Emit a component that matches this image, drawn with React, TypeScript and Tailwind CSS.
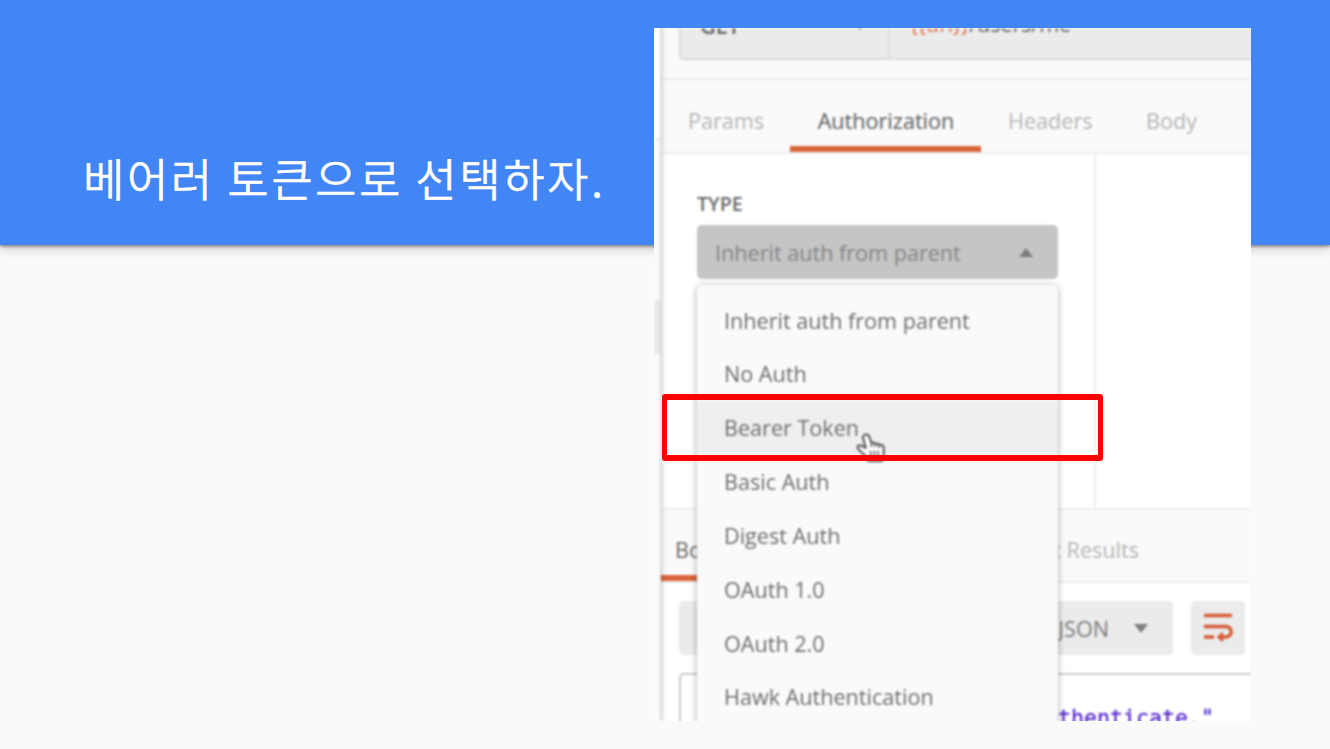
import type { ReactNode } from "react";

const authTypes = [
  "Inherit auth from parent",
  "No Auth",
  "Bearer Token",
  "Basic Auth",
  "Digest Auth",
  "OAuth 1.0",
  "OAuth 2.0",
  "Hawk Authentication",
];

function Triangle({ up = false }: { up?: boolean }) {
  return (
    <svg width="14" height="9" viewBox="0 0 14 9" className="shrink-0 fill-[#7c7c7c]">
      {up ? <path d="M7 0 14 9H0z" /> : <path d="M0 0h14L7 9z" />}
    </svg>
  );
}

function Tab({ children, active = false, className }: { children: ReactNode; active?: boolean; className: string }) {
  return (
    <div
      className={`flex h-full shrink-0 items-center whitespace-nowrap border-b-[6px] ${
        active ? "border-[#d9633a] text-[#6a6a6a]" : "border-transparent text-[#b5b5b5]"
      } ${className}`}
    >
      {children}
    </div>
  );
}

function RequestBar() {
  return (
    <div className="h-[52px] border-b-2 border-[#efefef] pl-[18px]">
      <div className="flex h-8 w-[600px] overflow-hidden rounded-bl-[5px] border-b-2 border-l-2 border-[#dadada] bg-[#ebebeb]">
        <div className="-mt-[19px] flex h-[33px] w-[207px] shrink-0 items-center pl-[19px] font-semibold text-[#666]">
          <span className="w-[153px]">GET</span>
          <Triangle />
        </div>
        <div className="h-8 w-px bg-[#d0d0d0]" />
        <div className="-mt-[21px] flex h-[33px] items-center pl-[21px] tracking-[-0.1px] text-[#666]">
          <span className="text-[#dd7755]">{"{{url}}"}</span>/users/me
        </div>
      </div>
    </div>
  );
}

function AuthMenu() {
  return (
    <ul className="absolute left-[43px] top-[257px] h-[460px] w-[361px] rounded-t-[5px] bg-[#fafafa] pt-[8.6px] shadow-[0_1px_6px_rgba(0,0,0,0.36)]">
      {authTypes.map((name) => (
        <li
          key={name}
          className={`flex h-[53.85px] items-center pl-[27px] text-[#6c6c6c] ${name === "Bearer Token" ? "bg-[#efefef]" : ""}`}
        >
          {name}
        </li>
      ))}
    </ul>
  );
}

function HandCursor() {
  return (
    <svg className="absolute left-[202px] top-[403px]" width="30" height="34" viewBox="0 0 31 36" fill="none">
      <path
        d="M9 4c2-1 4 0 5 3l2 6c1-1 3-1 4 1 1-1 4-1 4 1 2-1 5 0 5 3v6c0 3-2 5-2 8H13c-1-4-4-6-7-9l-4-4c-2-3 1-5 4-3l4 2-3-11c0-1 1-3 2-3z"
        fill="#fff"
        stroke="#606060"
        strokeWidth="2.3"
        strokeLinejoin="round"
      />
      <path d="M15 21v9m4-9v9m4-9v9" stroke="#606060" strokeWidth="1.7" />
      <path d="M16 13v4m4-3v3m4-2v3" stroke="#606060" strokeWidth="1.7" />
    </svg>
  );
}

function WrapIcon() {
  return (
    <svg width="30" height="30" viewBox="0 0 30 30" fill="none" stroke="#d75a35" strokeWidth="3.6">
      <path d="M1 2.500h28M1 13.500h21.500c7.500 0 7.500 10.500 0 10.500h-5M1 24h10" />
      <path d="m20 18.500-6.500 5.500 6.500 5.500z" fill="#d75a35" stroke="none" />
    </svg>
  );
}

function ClientWindow() {
  return (
    <div className="absolute left-[654px] top-[28px] h-[693px] w-[597px] overflow-hidden bg-white">
      <div className="flex h-full w-full font-['Open_Sans',sans-serif] text-[21.6px] leading-[30px] blur-[0.8px]">
        <div className="flex w-[7px] shrink-0 flex-col bg-[#fafafa]">
          <div className="h-[112px] border-b-2 border-[#eee] bg-white" />
          <div className="h-[160px]" />
          <div className="h-[54px] bg-[#e9e9e9]" />
        </div>
        <div className="relative w-[590px] shrink-0 bg-white">
          <div className="bg-[#fafafa]">
            <RequestBar />
            <div className="flex h-[74px] border-b-2 border-[#eee]">
              <Tab className="w-[129px] pl-[27px] pt-[16px]">Params</Tab>
              <Tab active className="w-[191px] justify-center pl-px pt-[16px] [-webkit-text-stroke:0.2px]">Authorization</Tab>
              <Tab className="w-[138px] pl-[27px] pt-[16px]">Headers</Tab>
              <Tab className="pl-[27px] pt-[16px]">Body</Tab>
            </div>
          </div>
          <div className="flex h-[354px]">
            <div className="w-[435px] shrink-0 border-r-2 border-[#eee] pl-9 pt-[35px]">
              <div className="text-[19.6px] font-semibold text-[#686868]">TYPE</div>
              <div className="mt-[6px] flex h-[54px] w-[361px] items-center justify-between rounded-[5px] bg-[#c5c5c5] pl-[18px] pr-[25px] text-[#858585]">
                <span className="pt-[2px]">Inherit auth from parent</span>
                <Triangle up />
              </div>
            </div>
          </div>
          <div className="flex h-[75px] justify-between border-y-2 border-[#eee] bg-[#fafafa] pr-[112px]">
            <Tab active className="w-[90px] pl-[14px] pt-[14px]">Body</Tab>
            <Tab className="pt-[14px]">Test Results</Tab>
          </div>
          <div className="flex gap-[18px] pl-[18px] pt-[18px]">
            <div className="flex h-[54px] w-[494px] shrink-0 items-center justify-end gap-[25px] rounded-[5px] bg-[#ebebeb] pr-[25px] text-[#7c7c7c]">
              <span className="pt-px">JSON</span>
              <Triangle />
            </div>
            <div className="flex h-[54px] w-[54px] shrink-0 items-center justify-center rounded-[5px] bg-[#ebebeb]">
              <WrapIcon />
            </div>
          </div>
          <div className="ml-[18px] mt-[18px] h-[70px] overflow-hidden rounded-tl-[5px] border-l-2 border-t-2 border-[#cacaca] pr-[37px] pt-[28px] text-right font-['DejaVu_Sans_Mono',monospace] text-[21.6px] text-[#5526cf] [-webkit-text-stroke:0.3px]">
            "Please authenticate."
          </div>
          <div className="pointer-events-none absolute inset-y-0 -left-px w-[6px] bg-linear-to-r from-black/15 to-transparent" />
        </div>
      </div>
      <div className="absolute inset-0 font-['Open_Sans',sans-serif] text-[21.6px] leading-[30px] blur-[0.8px]">
        <AuthMenu />
        <HandCursor />
      </div>
    </div>
  );
}

export default function App() {
  return (
    <main className="relative h-[749px] w-[1330px] overflow-hidden bg-[#fafafa]">
      <header className="flex h-[245px] items-end bg-[#4285f4] pb-[34px] pl-[83px] shadow-[0_2px_2px_rgba(0,0,0,0.3),0_4px_10px_rgba(0,0,0,0.2)]">
        <h1 className="whitespace-nowrap font-['Noto_Sans_CJK_KR',sans-serif] text-[45px] font-[350] leading-[66px] tracking-[2.5px] text-white [-webkit-text-stroke:0.3px]">
          베어러 토큰으로 선택하자.
        </h1>
      </header>
      <ClientWindow />
      <div className="absolute left-[662px] top-[394px] h-[67px] w-[441px] rounded-[3px] border-[6px] border-x-[5px] border-[#f00]" />
    </main>
  );
}
